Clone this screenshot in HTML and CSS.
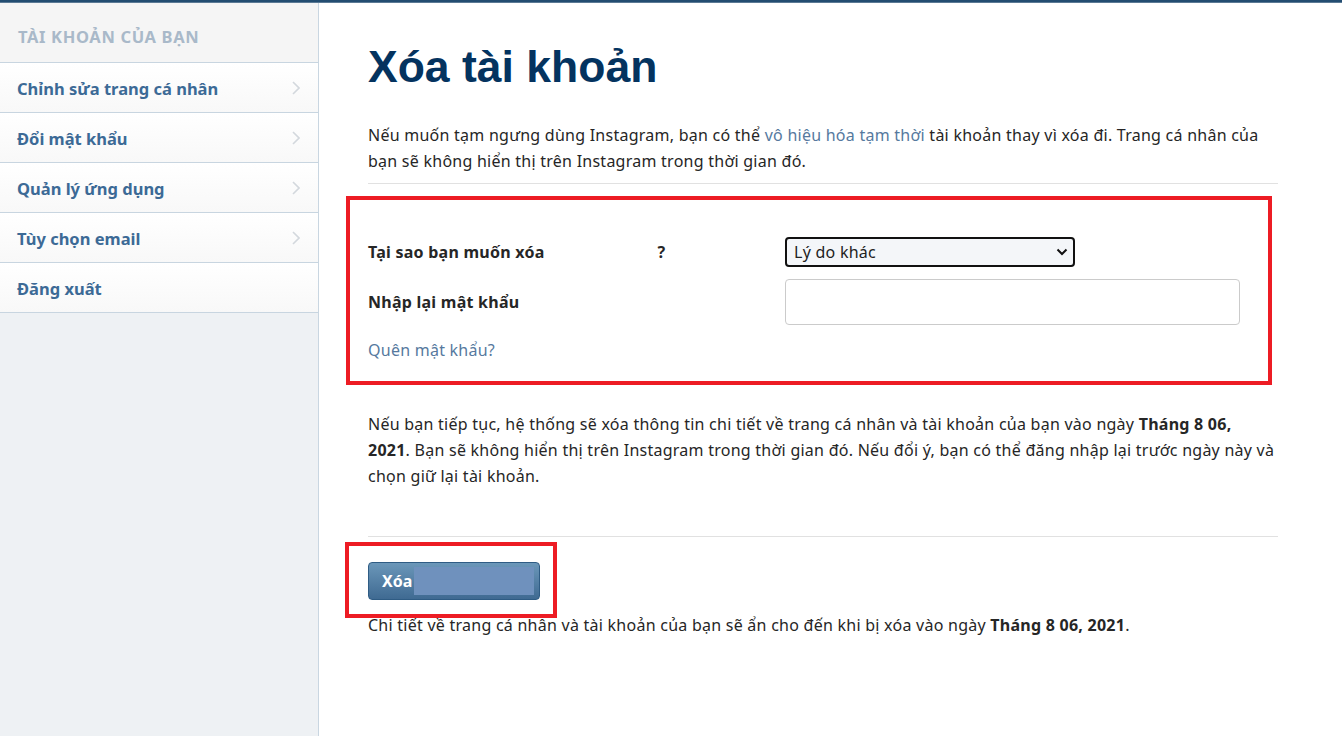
FILE: index.html
```html
<!DOCTYPE html>
<html lang="vi">
<head>
<meta charset="utf-8">
<title>Xóa tài khoản</title>
<link rel="stylesheet" href="styles.css">
</head>
<body>
<div class="topbar"></div>
<div class="layout">
  <aside class="sidebar">
    <div class="sidebar-title">TÀI KHOẢN CỦA BẠN</div>
    <ul class="menu">
      <li class="menu-item">Chỉnh sửa trang cá nhân<svg class="chev" width="8" height="14" viewBox="0 0 8 14"><path d="M1 1l6 6-6 6" fill="none" stroke="#d3d8dd" stroke-width="1.6"/></svg></li>
      <li class="menu-item">Đổi mật khẩu<svg class="chev" width="8" height="14" viewBox="0 0 8 14"><path d="M1 1l6 6-6 6" fill="none" stroke="#d3d8dd" stroke-width="1.6"/></svg></li>
      <li class="menu-item">Quản lý ứng dụng<svg class="chev" width="8" height="14" viewBox="0 0 8 14"><path d="M1 1l6 6-6 6" fill="none" stroke="#d3d8dd" stroke-width="1.6"/></svg></li>
      <li class="menu-item">Tùy chọn email<svg class="chev" width="8" height="14" viewBox="0 0 8 14"><path d="M1 1l6 6-6 6" fill="none" stroke="#d3d8dd" stroke-width="1.6"/></svg></li>
      <li class="menu-item">Đăng xuất</li>
    </ul>
  </aside>
  <main class="main">
    <h1 class="title">Xóa tài khoản</h1>
    <p class="text intro">Nếu muốn tạm ngưng dùng Instagram, bạn có thể <a class="link" href="#">vô hiệu hóa tạm thời</a> tài khoản thay vì xóa đi. Trang cá nhân của bạn sẽ không hiển thị trên Instagram trong thời gian đó.</p>
    <hr class="rule">
    <section class="form-box">
      <div class="form-grid">
        <label class="label">Tại sao bạn muốn xóa<span class="gap"></span>?</label>
        <div class="select-wrap">
          <select class="select"><option>Lý do khác</option></select>
          <svg class="select-chev" width="12" height="8" viewBox="0 0 12 8"><path d="M1.5 1.5l4.5 4.5 4.5-4.5" fill="none" stroke="#111" stroke-width="2"/></svg>
        </div>
        <label class="label">Nhập lại mật khẩu</label>
        <input class="input" type="password">
      </div>
      <a class="link forgot" href="#">Quên mật khẩu?</a>
    </section>
    <p class="text warn">Nếu bạn tiếp tục, hệ thống sẽ xóa thông tin chi tiết về trang cá nhân và tài khoản của bạn vào ngày <b>Tháng 8 06, 2021</b>. Bạn sẽ không hiển thị trên Instagram trong thời gian đó. Nếu đổi ý, bạn có thể đăng nhập lại trước ngày này và chọn giữ lại tài khoản.</p>
    <hr class="rule rule2">
    <div class="btn-wrap">
      <button class="btn">Xóa<span class="redact"></span></button>
      <span class="mark"></span>
    </div>
    <p class="text note">Chi tiết về trang cá nhân và tài khoản của bạn sẽ ẩn cho đến khi bị xóa vào ngày <b>Tháng 8 06, 2021</b>.</p>
  </main>
</div>
</body>
</html>
```

FILE: styles.css
```css
* { box-sizing: border-box; }
html, body { margin: 0; padding: 0; }
body {
  font-family: "Noto Sans", "Open Sans", sans-serif;
  font-size: 16px;
  letter-spacing: 0.25px;
  color: #262626;
  background: #fff;
  height: 736px;
  overflow: hidden;
}
.topbar {
  height: 3px;
  background: #234d71;
  border-bottom: 1px solid #5b7a95;
}
.layout {
  display: flex;
  height: 733px;
}
.sidebar {
  width: 319px;
  flex: none;
  background: #eef1f4;
  border-right: 1px solid #c9d6e1;
  letter-spacing: 0;
}
.sidebar-title {
  height: 60px;
  background: #f5f5f5;
  border-bottom: 1px solid #c8d5e0;
  display: flex;
  align-items: center;
  padding-left: 18px;
  padding-top: 7px;
  font-family: "Noto Sans", sans-serif;
  font-weight: 700;
  font-size: 16.5px;
  letter-spacing: 0.65px;
  color: #a9b9c9;
}
.menu {
  list-style: none;
  margin: 0;
  padding: 0;
}
.menu-item {
  height: 50px;
  display: flex;
  align-items: center;
  justify-content: space-between;
  padding: 1px 18px 0 17px;
  border-bottom: 1px solid #c8d5e0;
  background: linear-gradient(#ffffff, #f8f8f8);
  font-weight: 700;
  font-size: 16.5px;
  color: #3c6a96;
}
.chev { flex: none; }
.main {
  flex: 1;
  padding: 0 64px 0 49px;
}
.title {
  margin: 41px 0 0;
  font-family: "Liberation Sans", Arial, sans-serif;
  font-weight: 700;
  font-size: 44.5px;
  line-height: 45px;
  letter-spacing: 0;
  color: #04335f;
}
.text {
  margin: 0;
  line-height: 26px;
}
.intro { margin-top: 33px; }
.link {
  color: #56799e;
  text-decoration: none;
}
.rule {
  border: 0;
  border-top: 1px solid #e1e1e1;
  margin: 9px 0 0;
}
.form-box {
  margin: 12px 6px 0 -22px;
  border: 4px solid #ed1c24;
  padding: 37px 0 18px 18px;
}
.form-grid {
  display: grid;
  grid-template-columns: 417px auto;
  row-gap: 12px;
  align-items: center;
}
.label {
  font-weight: 700;
  line-height: 26px;
}
.gap {
  display: inline-block;
  width: 113px;
}
.select-wrap {
  position: relative;
  width: 290px;
  height: 30px;
}
.select {
  appearance: none;
  -webkit-appearance: none;
  width: 290px;
  height: 30px;
  border: 2px solid #111;
  border-radius: 4px;
  background: #f4f6f9;
  font-family: "Noto Sans", sans-serif;
  font-size: 16px;
  letter-spacing: 0.25px;
  color: #222;
  padding: 0 0 0 7px;
}
.select-chev {
  position: absolute;
  right: 7px;
  top: 11px;
  pointer-events: none;
}
.input {
  width: 455px;
  height: 46px;
  border: 1px solid #cbcbcb;
  border-radius: 4px;
  background: #fff;
}
.forgot {
  display: block;
  margin-top: 12px;
  line-height: 26px;
}
.warn { margin-top: 26px; }
.rule2 { margin-top: 47px; }
.btn-wrap {
  position: relative;
  margin-top: 25px;
  width: 172px;
  height: 38px;
}
.btn {
  width: 172px;
  height: 38px;
  display: flex;
  align-items: center;
  padding: 0 0 0 13px;
  border: 1px solid #2f5c84;
  border-radius: 4px;
  background: linear-gradient(#6b97b9, #3f6a92);
  color: #fff;
  font-family: "Noto Sans", sans-serif;
  font-weight: 700;
  font-size: 16px;
}
.redact {
  display: inline-block;
  width: 120px;
  height: 28px;
  margin-left: 2px;
  background: #6f91bd;
}
.mark {
  position: absolute;
  left: -23px;
  top: -20px;
  right: -17px;
  bottom: -18px;
  border: 4px solid #ed1c24;
}
.note { margin-top: 12px; }
```
